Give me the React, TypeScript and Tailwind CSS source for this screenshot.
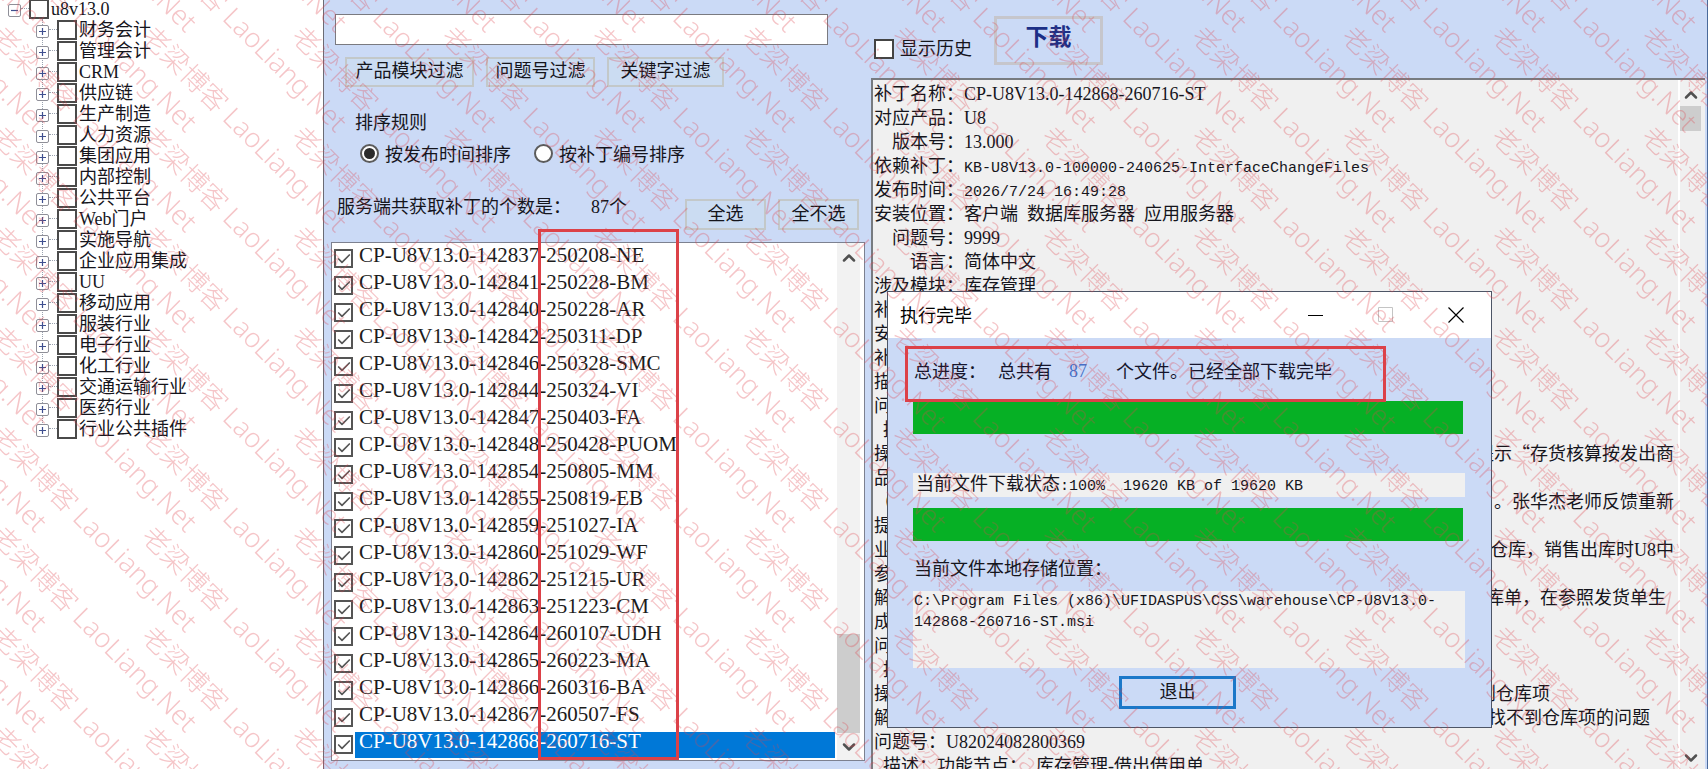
import React from 'react';
import { Check, ChevronDown, ChevronUp } from 'lucide-react';

const treeItems = [
  '财务会计',
  '管理会计',
  'CRM',
  '供应链',
  '生产制造',
  '人力资源',
  '集团应用',
  '内部控制',
  '公共平台',
  'Web门户',
  '实施导航',
  '企业应用集成',
  'UU',
  '移动应用',
  '服装行业',
  '电子行业',
  '化工行业',
  '交通运输行业',
  '医药行业',
  '行业公共插件',
];

const patches = [
  'CP-U8V13.0-142837-250208-NE',
  'CP-U8V13.0-142841-250228-BM',
  'CP-U8V13.0-142840-250228-AR',
  'CP-U8V13.0-142842-250311-DP',
  'CP-U8V13.0-142846-250328-SMC',
  'CP-U8V13.0-142844-250324-VI',
  'CP-U8V13.0-142847-250403-FA',
  'CP-U8V13.0-142848-250428-PUOM',
  'CP-U8V13.0-142854-250805-MM',
  'CP-U8V13.0-142855-250819-EB',
  'CP-U8V13.0-142859-251027-IA',
  'CP-U8V13.0-142860-251029-WF',
  'CP-U8V13.0-142862-251215-UR',
  'CP-U8V13.0-142863-251223-CM',
  'CP-U8V13.0-142864-260107-UDH',
  'CP-U8V13.0-142865-260223-MA',
  'CP-U8V13.0-142866-260316-BA',
  'CP-U8V13.0-142867-260507-FS',
  'CP-U8V13.0-142868-260716-ST',
];
const selectedPatch = 'CP-U8V13.0-142868-260716-ST';

const fields = [
  { label: '补丁名称：', value: 'CP-U8V13.0-142868-260716-ST' },
  { label: '对应产品：', value: 'U8' },
  { label: '版本号：', value: '13.000' },
  { label: '依赖补丁：', value: 'KB-U8V13.0-100000-240625-InterfaceChangeFiles' },
  { label: '发布时间：', value: '2026/7/24 16:49:28' },
  { label: '安装位置：', value: '客户端 数据库服务器 应用服务器' },
  { label: '问题号：', value: '9999' },
  { label: '语言：', value: '简体中文' },
  { label: '涉及模块：', value: '库存管理' },
];

// start and end of each description line, the dialog covers the middle
const notes: Array<{ start: string; end?: string; pad?: string }> = [
  { start: '补' },
  { start: '安' },
  { start: '补' },
  { start: '描' },
  { start: '问' },
  { start: ' 描' },
  { start: '操', end: '提示“存货核算按发出商' },
  { start: '品' },
  { start: '（', end: ')。张华杰老师反馈重新' },
  { start: '提' },
  { start: '业', end: '有仓库，销售出库时U8中' },
  { start: '参' },
  { start: '解', end: '库单，在参照发货单生', pad: 'pr-2' },
  { start: '成' },
  { start: '问' },
  { start: ' 描' },
  { start: '操', end: '到仓库项', pad: 'pr-31' },
  { start: '解', end: '找不到仓库项的问题', pad: 'pr-6' },
  { start: '问题号：U82024082800369' },
  { start: ' 描述：功能节点： 库存管理-借出借用单' },
];

export default function App() {
  return (
    <div className="relative flex h-screen overflow-hidden bg-[#cbdaf6] font-['Noto_Sans_CJK_SC',sans-serif] text-lg leading-5 text-[#15151c]">
      <ProductTree />
      <PatchPanel />
      <DetailPanel />
      <Watermark />
    </div>
  );
}

function Mixed({ text }: { text: string }) {
  return (
    <span className="whitespace-pre">
      {text.split(/([\x20-\x7e]+)/).map((part, i) => {
        if (i % 2 === 0) return part;
        const isCode = /^[A-Z0-9.-]+$/.test(part);
        return (
          <span
            key={i}
            className={
              isCode
                ? "font-['Liberation_Serif',serif]"
                : "font-['Liberation_Mono',monospace] text-[15px]"
            }
          >
            {part}
          </span>
        );
      })}
    </span>
  );
}

function ProductTree() {
  return (
    <aside className="w-[324px] shrink-0 overflow-hidden border-r border-[#6b6b74] bg-white font-['Liberation_Serif','Noto_Sans_CJK_SC',serif]">
      <div className="-mt-0.5 flex h-[21px] items-center pl-2">
        <Expander open />
        <span className="w-2 border-t border-dotted border-gray-400" />
        <label className="flex items-center gap-0.5">
          <input type="checkbox" className="size-5 appearance-none border-2 border-[#4a4a4a] bg-white" />
          u8v13.0
        </label>
      </div>
      <ul className="relative">
        <li className="absolute top-0 bottom-2 left-[42px] border-l border-dotted border-gray-400" />
        {treeItems.map((item) => (
          <li key={item} className="flex h-[21px] items-center pl-9">
            <Expander />
            <span className="w-2 border-t border-dotted border-gray-400" />
            <label className="flex items-center gap-0.5 whitespace-nowrap">
              <input type="checkbox" className="size-5 appearance-none border-2 border-[#4a4a4a] bg-white" />
              {item}
            </label>
          </li>
        ))}
      </ul>
    </aside>
  );
}

function Expander({ open = false }: { open?: boolean }) {
  return (
    <button
      aria-label={open ? '折叠' : '展开'}
      className="relative z-10 mt-1 flex size-[13px] shrink-0 items-center justify-center rounded-xs border border-[#8f8f98] bg-white"
    >
      <svg viewBox="0 0 9 9" className="size-[9px]" stroke="#3f4f8f" strokeWidth="1.2">
        <path d={open ? 'M1 4.5h7' : 'M1 4.5h7M4.5 1v7'} />
      </svg>
    </button>
  );
}

function PlainButton({ children, className }: { children: React.ReactNode; className: string }) {
  return (
    <button className={`shrink-0 border-2 border-[#c3c8c9] bg-[#cbdcf2] pb-1.5 whitespace-nowrap ${className}`}>
      {children}
    </button>
  );
}

function PatchPanel() {
  return (
    <main className="w-[547px] shrink-0 pt-[14px] pl-[7px]">
      <input
        type="text"
        aria-label="过滤条件"
        className="ml-1 block h-[31px] w-[493px] border border-[#7a7a80] bg-white px-2"
      />

      <div className="mt-3 ml-[14px] flex gap-3">
        <PlainButton className="h-[30px] w-[129px]">产品模块过滤</PlainButton>
        <PlainButton className="h-[30px] w-[109px]">问题号过滤</PlainButton>
        <PlainButton className="h-[30px] w-[117px]">关键字过滤</PlainButton>
      </div>

      <fieldset className="mt-6 ml-6">
        <legend>排序规则</legend>
        <div className="mt-3 ml-1 flex gap-[22px]">
          <SortRadio label="按发布时间排序" checked />
          <SortRadio label="按补丁编号排序" />
        </div>
      </fieldset>

      <div className="mt-9 flex items-start gap-3">
        <p className="-mt-1 ml-1.5 flex grow gap-5 whitespace-nowrap">
          <span>服务端共获取补丁的个数是：</span>
          <Mixed text="87个" />
        </p>
        <PlainButton className="h-[31px] w-[81px]">全选</PlainButton>
        <PlainButton className="mr-3 h-[31px] w-[81px]">全不选</PlainButton>
      </div>

      <div className="relative mt-3 flex w-[534px] border border-[#7d8190] bg-white">
        <ul className="grow py-0.5 pl-0.5 font-['Liberation_Serif',serif] text-[21px]">
          {patches.map((name) => (
            <li key={name}>
              <label className="flex h-[27px] items-center gap-0.5">
                <Tick />
                <span
                  className={`grow pb-[7px] pl-1 leading-[19px] ${
                    name === selectedPatch ? 'bg-[#0078d7] text-white' : 'text-[#1c1c1c]'
                  }`}
                >
                  {name}
                </span>
              </label>
            </li>
          ))}
        </ul>
        <div className="mr-1 ml-0.5 flex w-[23px] flex-col items-center bg-[#f2f2f2]">
          <button aria-label="向上滚动" className="h-[30px]">
            <ChevronUp className="size-5 text-[#505050]" strokeWidth={3} />
          </button>
          <div className="mt-auto h-[99px] w-full bg-[#cdcdcd]" />
          <button aria-label="向下滚动" className="h-[27px]">
            <ChevronDown className="size-5 text-[#505050]" strokeWidth={3} />
          </button>
        </div>
        <div className="pointer-events-none absolute -top-[14px] bottom-0 left-[206px] w-[141px] border-3 border-[#dc4148]" />
      </div>
    </main>
  );
}

function SortRadio({ label, checked = false }: { label: string; checked?: boolean }) {
  return (
    <label className="flex items-center gap-1.5 whitespace-nowrap">
      <span className="relative grid size-5 place-items-center">
        <input
          type="radio"
          name="sort"
          defaultChecked={checked}
          className="peer size-[19px] appearance-none rounded-full border-2 border-[#5c5c5c] bg-white"
        />
        <span className="absolute hidden size-[11px] rounded-full bg-[#2b2b2b] peer-checked:block" />
      </span>
      {label}
    </label>
  );
}

function Tick() {
  return (
    <span className="relative grid size-[19px] shrink-0 place-items-center">
      <input
        type="checkbox"
        defaultChecked
        className="peer size-[19px] appearance-none border-2 border-[#555555] bg-white"
      />
      <Check className="absolute hidden size-4 text-[#555555] peer-checked:block" strokeWidth={2.5} />
    </span>
  );
}

function DetailPanel() {
  return (
    <section className="relative flex min-w-0 grow flex-col border-r border-[#4a6a9a] pr-[2px]">
      <div className="flex h-[78px] shrink-0 items-start">
        <label className="mt-[37px] ml-[3px] flex items-center gap-1.5 whitespace-nowrap">
          <input type="checkbox" className="size-5 appearance-none border-2 border-[#444444] bg-white" />
          <span className="pb-1">显示历史</span>
        </label>
        <button className="mt-4 ml-[22px] h-[49px] w-[109px] border-3 border-[#c6c6cc] bg-[#cbdaf6] pb-3 text-[23px] font-bold text-[#1c2f86]">
          下载
        </button>
      </div>

      <div className="flex min-h-0 grow overflow-hidden border-t-2 border-l-2 border-[#777b80] bg-[#f0f0f0]">
        <div className="min-w-0 grow pr-1 pl-px leading-6">
          {fields.map((field) => (
            <div key={field.label} className="flex h-6">
              <span className="w-[90px] shrink-0 text-right">{field.label}</span>
              <Mixed text={field.value} />
            </div>
          ))}
          {notes.map((note, i) => (
            <div key={i} className={`flex h-6 justify-between ${note.pad ?? ''}`}>
              <Mixed text={note.start} />
              {note.end && <Mixed text={note.end} />}
            </div>
          ))}
        </div>
        <div className="flex w-[27px] shrink-0 flex-col items-center border-l-2 border-white pr-1">
          <button aria-label="向上滚动" className="h-[26px] pt-1">
            <ChevronUp className="size-5 text-[#505050]" strokeWidth={3} />
          </button>
          <div className="h-[25px] w-full shrink-0 bg-[#cdcdcd]" />
          <button aria-label="向下滚动" className="mt-auto h-[23px]">
            <ChevronDown className="size-5 text-[#505050]" strokeWidth={3} />
          </button>
        </div>
      </div>

      <DownloadDialog />
    </section>
  );
}

function DownloadDialog() {
  return (
    <div
      role="dialog"
      aria-label="执行完毕"
      className="absolute top-[291px] left-4 w-[605px] border border-[#4d5566] bg-[#cbdaf6]"
    >
      <header className="flex h-[46px] items-center bg-white pl-3">
        <h2 className="grow pb-0.5 text-black">执行完毕</h2>
        <button aria-label="最小化" className="grid h-full w-[70px] place-items-center">
          <svg viewBox="0 0 16 16" className="size-4" stroke="#000" fill="none">
            <path d="M0 8.5h15" />
          </svg>
        </button>
        <button aria-label="最大化" className="grid h-full w-[70px] place-items-center" disabled>
          <svg viewBox="0 0 16 16" className="size-4" stroke="#c4c4c4" fill="none">
            <path d="M.5 .5h14v14h-14z" />
          </svg>
        </button>
        <button aria-label="关闭" className="grid h-full w-[70px] place-items-center">
          <svg viewBox="0 0 16 16" className="size-4" stroke="#000" fill="none" strokeWidth="1.2">
            <path d="M.5 .5l15 15M15.5 .5l-15 15" />
          </svg>
        </button>
      </header>

      <div className="relative px-[25px] pb-[18px]">
        <p className="flex h-[63px] items-center pl-px whitespace-nowrap text-[#15152c]">
          <span className="w-[84px]">总进度：</span>
          <span className="w-[71px]">总共有</span>
          <span className="w-[47px] text-[#4470c8]">
            <Mixed text="87" />
          </span>
          <span>个文件。已经全部下载完毕</span>
        </p>
        <div className="h-[33px] w-[550px] bg-[#06b025]" />

        <p className="mt-[39px] h-6 w-[552px] bg-[#f0f0f0] pl-[3px] leading-[18px]">
          <Mixed text="当前文件下载状态:100%  19620 KB of 19620 KB" />
        </p>
        <div className="mt-[11px] h-[33px] w-[550px] bg-[#06b025]" />

        <label htmlFor="save-path" className="mt-4 block pl-px">
          当前文件本地存储位置：
        </label>
        <textarea
          id="save-path"
          readOnly
          className="mt-[14px] block h-[77px] w-[552px] resize-none bg-[#f0f0f0] pl-px font-['Liberation_Mono',monospace] text-[15px] leading-[21px]"
          defaultValue="C:\Program Files (x86)\UFIDASPUS\CSS\warehouse\CP-U8V13.0-142868-260716-ST.msi"
        />
        <button className="mt-2 ml-[206px] h-[33px] w-[117px] border-3 border-[#1b78c9] bg-[#cbdaf6] pb-1.5">
          退出
        </button>

        <div className="pointer-events-none absolute top-2 left-[17px] h-14 w-[481px] border-3 border-[#dc4148]" />
      </div>
    </div>
  );
}

function Watermark() {
  const shifts = [-2, -1, 0, 1];

  return (
    <svg aria-hidden="true" className="pointer-events-none absolute inset-0 z-20 size-full">
      <defs>
        <pattern id="mark" width="150" height="100" patternUnits="userSpaceOnUse">
          {shifts.map((col) =>
            shifts.map((row) => (
              <text
                key={`${col}-${row}`}
                transform={`translate(${col * 150 - 10} ${row * 100 + 38}) rotate(45)`}
                className="fill-[#e04048]/30 font-['Noto_Sans','Noto_Sans_CJK_SC',sans-serif] text-[27px] font-light"
              >
                老梁博客 LaoLiang.Net
              </text>
            ))
          )}
        </pattern>
      </defs>
      <rect width="100%" height="100%" fill="url(#mark)" />
    </svg>
  );
}
